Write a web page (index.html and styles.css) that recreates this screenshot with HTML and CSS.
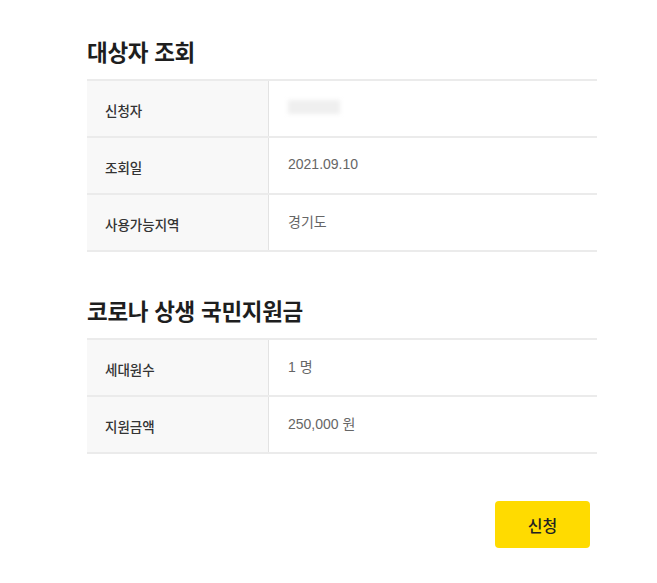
FILE: index.html
```html
<!DOCTYPE html>
<html lang="ko">
<head>
<meta charset="utf-8">
<link rel="stylesheet" href="styles.css">
</head>
<body>
<main class="page">
  <section class="section">
    <h2 class="title">대상자 조회</h2>
    <div class="table">
      <div class="row">
        <div class="label">신청자</div>
        <div class="value"><span class="masked"></span></div>
      </div>
      <div class="row">
        <div class="label">조회일</div>
        <div class="value">2021.09.10</div>
      </div>
      <div class="row">
        <div class="label">사용가능지역</div>
        <div class="value">경기도</div>
      </div>
    </div>
  </section>
  <section class="section second">
    <h2 class="title">코로나 상생 국민지원금</h2>
    <div class="table">
      <div class="row">
        <div class="label">세대원수</div>
        <div class="value">1 명</div>
      </div>
      <div class="row">
        <div class="label">지원금액</div>
        <div class="value">250,000 원</div>
      </div>
    </div>
  </section>
  <div class="actions">
    <button class="btn" type="button">신청</button>
  </div>
</main>
</body>
</html>
```

FILE: styles.css
```css
* { box-sizing: border-box; }
html, body { margin: 0; padding: 0; background: #fff; }
body {
  font-family: "Noto Sans CJK KR", "Noto Sans", sans-serif;
  color: #333;
}
.page {
  width: 510px;
  margin-left: 87px;
  padding-top: 36px;
}
.title {
  margin: 0 0 13px;
  font-size: 22.5px;
  line-height: 30px;
  font-weight: 700;
  color: #1e1e1e;
  letter-spacing: -0.3px;
}
.second { margin-top: 43px; }
.table {
  border-top: 2px solid #ebebeb;
}
.row {
  display: flex;
  height: 57px;
  border-bottom: 2px solid #ebebeb;
}
.label {
  width: 182px;
  background: #f8f8f8;
  border-right: 1px solid #e3e3e3;
  padding: 2px 0 0 18px;
  display: flex;
  align-items: center;
  font-size: 13.5px;
  font-weight: 500;
  color: #333;
}
.value {
  flex: 1;
  padding: 0 0 4px 19px;
  display: flex;
  align-items: center;
  font-family: "Liberation Sans", "Noto Sans CJK KR", sans-serif;
  font-size: 14px;
  color: #666;
}
.masked {
  display: block;
  width: 52px;
  height: 14px;
  background: #efefef;
  filter: blur(2px);
}
.actions {
  display: flex;
  justify-content: flex-end;
  margin-top: 47px;
  margin-right: 7px;
}
.btn {
  width: 95px;
  height: 47px;
  border: 0;
  border-radius: 4px;
  background: #ffdb00;
  color: #222;
  font-family: "Noto Sans CJK KR", sans-serif;
  font-size: 16px;
  font-weight: 500;
  cursor: pointer;
}
```
